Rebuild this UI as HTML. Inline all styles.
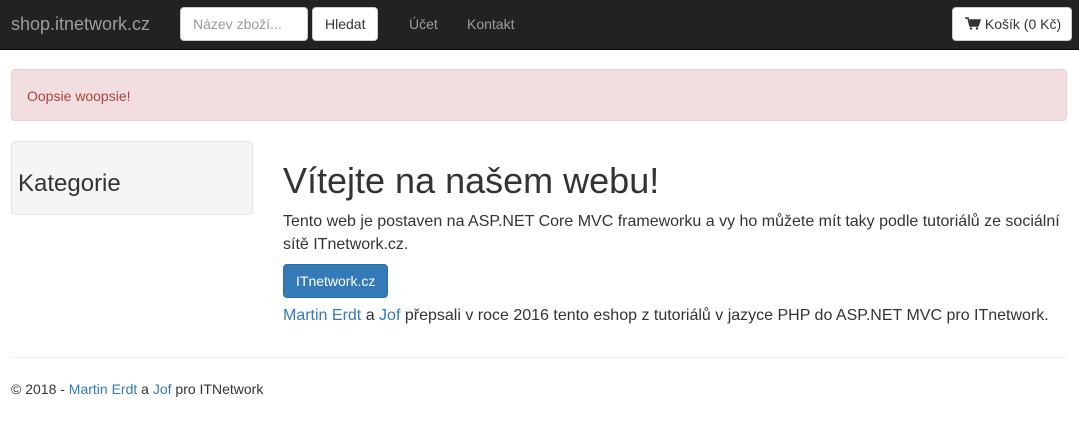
<!DOCTYPE html>
<html><head><meta charset="utf-8"><style>
*{box-sizing:border-box}
body{margin:0;width:1079px;height:431px;font-family:"Liberation Sans",sans-serif;font-size:14px;color:#333;background:#fff;position:relative;overflow:hidden}
.nav{position:absolute;left:0;top:0;width:1079px;height:50px;background:#222;border-bottom:1px solid #080808}
.abs{position:absolute;white-space:nowrap}
.brand{left:11px;top:14px;font-size:18px;color:#9d9d9d}
.inp{left:180px;top:7px;width:128px;height:34px;background:#fff;border:1px solid #ccc;border-radius:4px;color:#999;padding:8px 12px}
.btn{background:#fff;border:1px solid #ccc;border-radius:4px;color:#333;height:34px;padding:8px 12px}
.link{color:#9d9d9d;top:16px}
.alert{left:11px;top:69px;width:1056px;height:52px;background:#f2dede;border:1px solid #ebccd1;border-radius:4px;color:#a94442;padding:18px 15px}
.panel{left:11px;top:141px;width:242px;height:74px;background:#f5f5f5;border:1px solid #e3e3e3;border-radius:4px;font-size:24px;padding:28px 6px}
h1{position:absolute;left:283px;top:159px;margin:0;font-size:36px;font-weight:500;line-height:44px}
a{color:#337ab7;text-decoration:none}
</style></head><body>
<div class="nav"></div>
<div class="abs brand">shop.itnetwork.cz</div>
<div class="abs inp">Název zboží...</div>
<div class="abs btn" style="left:312px;top:7px;width:66px">Hledat</div>
<div class="abs link" style="left:409px">Účet</div>
<div class="abs link" style="left:467px">Kontakt</div>
<div class="abs btn" style="left:952px;top:7px;width:120px;padding-left:12px;padding-right:0"><svg width="16" height="13" viewBox="0 0 16 13" style="vertical-align:-1px"><path d="M0 1h3l2 8h8l2-6H4.5" fill="none" stroke="#333" stroke-width="1.6"/><path d="M4.5 3h10.5l-2 6H5z" fill="#333"/><circle cx="6" cy="11.5" r="1.2" fill="#333"/><circle cx="12" cy="11.5" r="1.2" fill="#333"/></svg> Košík (0 Kč)</div>
<div class="abs alert">Oopsie woopsie!</div>
<div class="abs panel">Kategorie</div>
<h1>Vítejte na našem webu!</h1>
<div class="abs" style="left:283px;top:210px;width:780px;font-size:16px;line-height:23px;white-space:normal">Tento web je postaven na ASP.NET Core MVC frameworku a vy ho můžete mít taky podle tutoriálů ze sociální sítě ITnetwork.cz.</div>
<div class="abs" style="left:283px;top:264px;width:105px;height:34px;background:#337ab7;border:1px solid #2e6da4;border-radius:4px;color:#fff;padding:8px 12px">ITnetwork.cz</div>
<div class="abs" style="left:283px;top:307px;font-size:16px"><a>Martin Erdt</a> a <a>Jof</a> přepsali v roce 2016 tento eshop z tutoriálů v jazyce PHP do ASP.NET MVC pro ITnetwork.</div>
<div class="abs" style="left:11px;top:357px;width:1056px;border-top:1px solid #eee"></div>
<div class="abs" style="left:11px;top:381px">© 2018 - <a>Martin Erdt</a> a <a>Jof</a> pro ITNetwork</div>
</body></html>
